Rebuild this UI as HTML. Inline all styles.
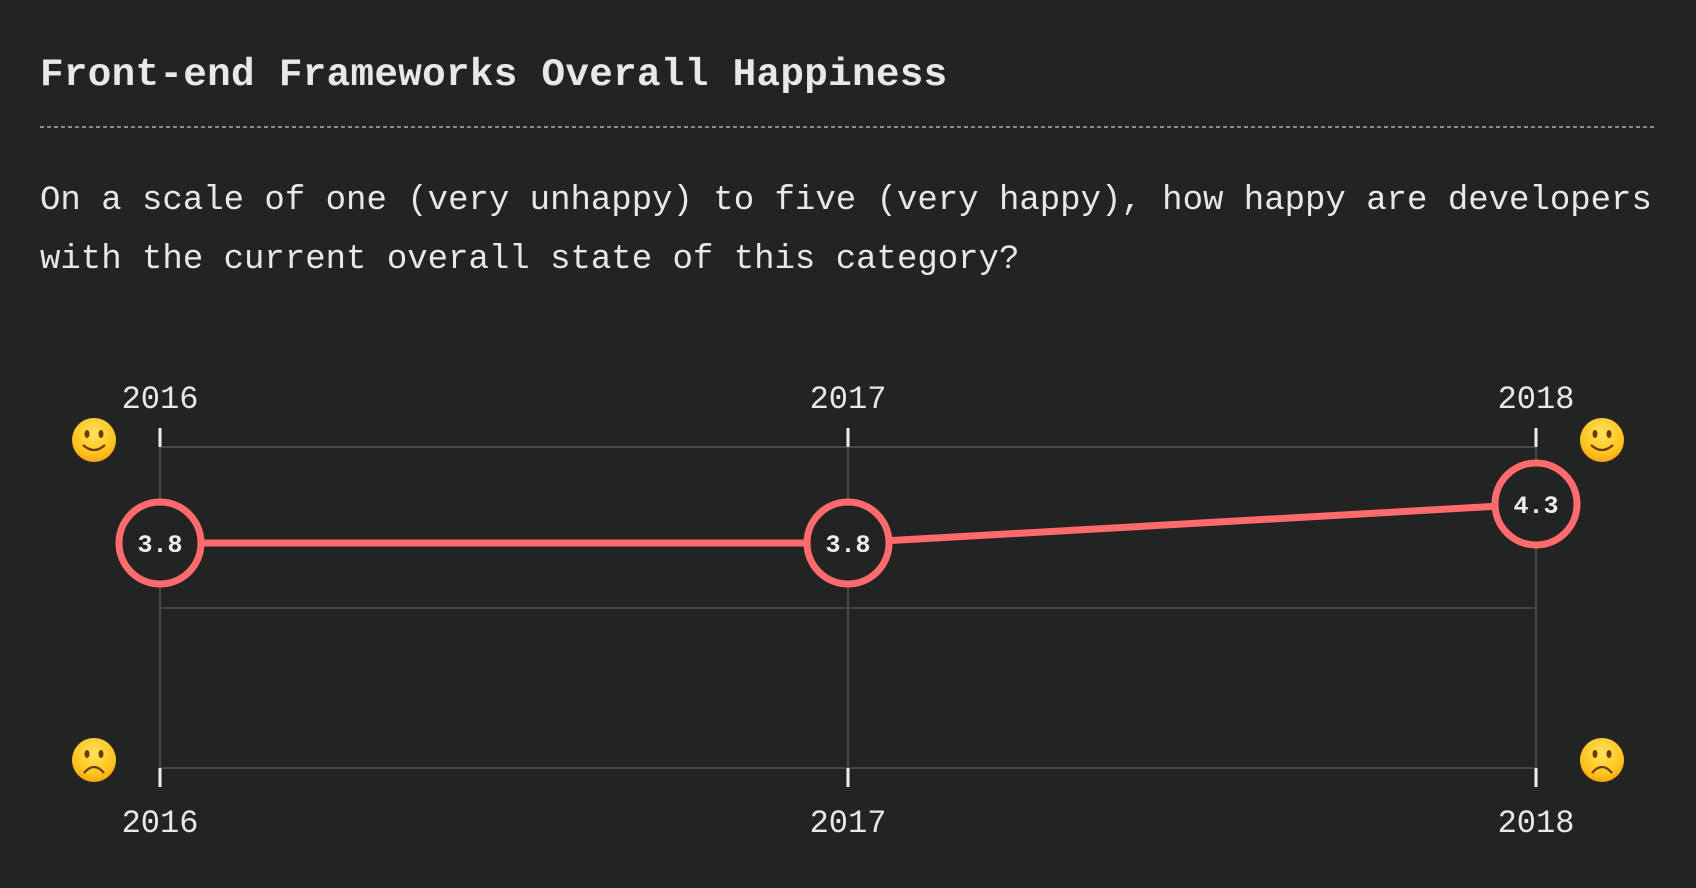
<!DOCTYPE html>
<html><head><meta charset="utf-8"><style>
html,body{margin:0;padding:0;background:#222323;}
body{width:1696px;height:888px;overflow:hidden;position:relative;font-family:"Liberation Mono","DejaVu Sans Mono",monospace;color:#e8e8e8;}
h1{position:absolute;left:40px;top:45px;margin:0;font-size:39.3px;font-weight:bold;line-height:60px;letter-spacing:0.3px;}
.rule{position:absolute;left:40px;top:126px;width:1616px;height:0;background:repeating-linear-gradient(90deg,#8a8a8a 0 4px,transparent 4px 7px);height:1.5px;}
p{position:absolute;left:40px;top:172px;margin:0;font-size:34px;line-height:59px;width:1680px;}
svg{position:absolute;left:0;top:0;}
</style></head><body>
<h1>Front-end Frameworks Overall Happiness</h1>
<div class="rule"></div>
<p>On a scale of one (very unhappy) to five (very happy), how happy are developers<br>with the current overall state of this category?</p>
<svg width="1696" height="888" viewBox="0 0 1696 888">
<defs>
<radialGradient id="g" cx="0.5" cy="0.35" r="0.7"><stop offset="0" stop-color="#ffe45c"/><stop offset="0.7" stop-color="#ffc21a"/><stop offset="1" stop-color="#f49a0c"/></radialGradient>
<g id="happy"><circle r="22" fill="url(#g)"/><ellipse cx="-7" cy="-6" rx="2.5" ry="4" fill="#6b3a10"/><ellipse cx="7" cy="-6" rx="2.5" ry="4" fill="#6b3a10"/><path d="M-11 5 Q0 15 11 5" stroke="#6b3a10" stroke-width="2.2" fill="none"/></g>
<g id="sad"><circle r="22" fill="url(#g)"/><ellipse cx="-7" cy="-6" rx="2.5" ry="4" fill="#6b3a10"/><ellipse cx="7" cy="-6" rx="2.5" ry="4" fill="#6b3a10"/><path d="M-10 13 Q0 1 10 13" stroke="#6b3a10" stroke-width="2.2" fill="none"/></g>
</defs>
<g stroke="#555" stroke-width="1.5" fill="none">
<line x1="160" y1="447" x2="1536" y2="447"/>
<line x1="160" y1="608" x2="1536" y2="608"/>
<line x1="160" y1="768" x2="1536" y2="768"/>
<line x1="160" y1="447" x2="160" y2="768"/>
<line x1="848" y1="447" x2="848" y2="768"/>
<line x1="1536" y1="447" x2="1536" y2="768"/>
</g>
<g stroke="#eee" stroke-width="3">
<line x1="160" y1="428" x2="160" y2="447"/><line x1="848" y1="428" x2="848" y2="447"/><line x1="1536" y1="428" x2="1536" y2="447"/>
<line x1="160" y1="768" x2="160" y2="787"/><line x1="848" y1="768" x2="848" y2="787"/><line x1="1536" y1="768" x2="1536" y2="787"/>
</g>
<g font-family="Liberation Mono, monospace" font-size="32" fill="#e8e8e8" text-anchor="middle">
<text x="160" y="408">2016</text><text x="848" y="408">2017</text><text x="1536" y="408">2018</text>
<text x="160" y="832">2016</text><text x="848" y="832">2017</text><text x="1536" y="832">2018</text>
</g>
<polyline points="160,543 848,543 1536,504" stroke="#ff6b6b" stroke-width="7" fill="none"/>
<g stroke="#ff6b6b" stroke-width="7" fill="#222323">
<circle cx="160" cy="543" r="41"/><circle cx="848" cy="543" r="41"/><circle cx="1536" cy="504" r="41"/>
</g>
<g font-family="Liberation Mono, monospace" font-size="25" font-weight="bold" fill="#eee" text-anchor="middle">
<text x="160" y="552">3.8</text><text x="848" y="552">3.8</text><text x="1536" y="513">4.3</text>
</g>
<use href="#happy" x="94" y="440"/><use href="#happy" x="1602" y="440"/>
<use href="#sad" x="94" y="760"/><use href="#sad" x="1602" y="760"/>
</svg>
</body></html>
